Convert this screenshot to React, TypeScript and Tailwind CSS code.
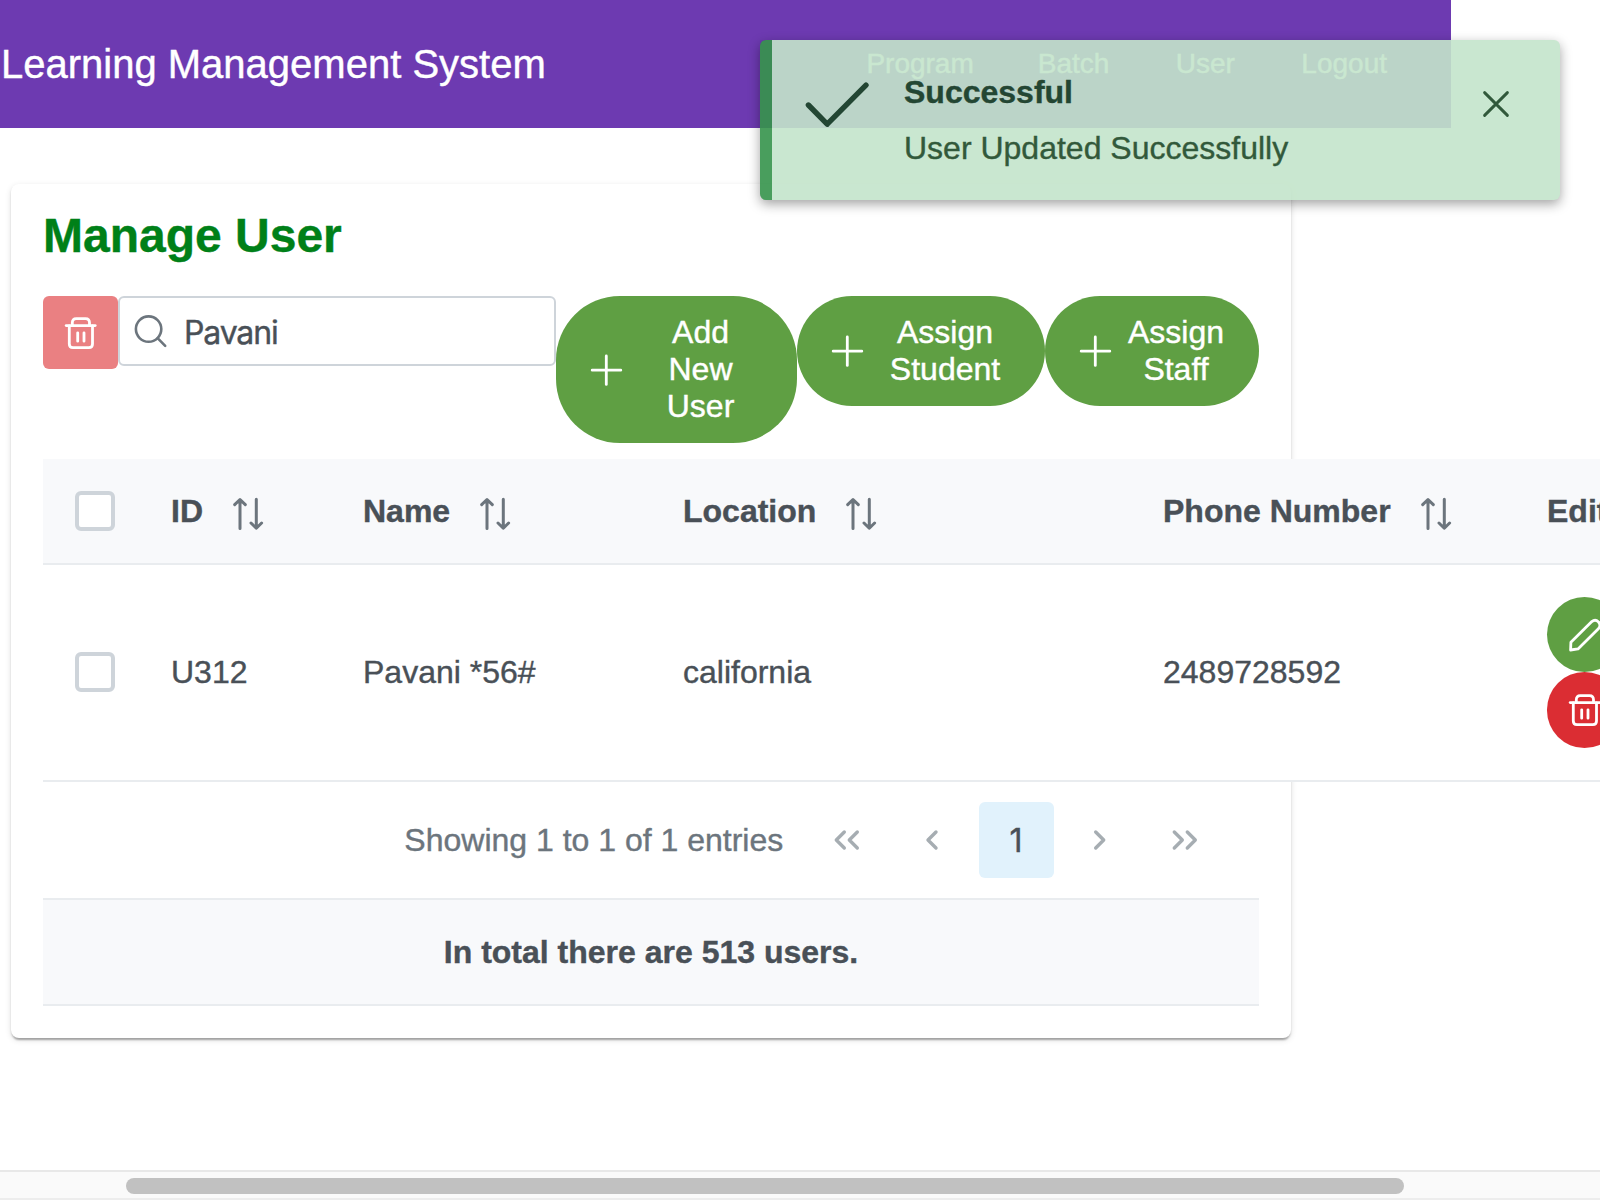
import type { ReactNode } from "react";

function Glyph({ children, className = "size-8", width = 2.8 }: { children: ReactNode; className?: string; width?: number }) {
  return (
    <svg
      viewBox="0 0 32 32"
      className={`shrink-0 overflow-visible ${className}`}
      fill="none"
      stroke="currentColor"
      strokeWidth={width}
      strokeLinecap="round"
      strokeLinejoin="round"
    >
      {children}
    </svg>
  );
}

const Trash = () => (
  <Glyph>
    <path d="M1.2 8.6H30.2" />
    <path d="M7.3 8.4V5.8Q7.3 1.6 11.3 1.6H20.5Q24.5 1.6 24.5 5.8V8.4" />
    <path d="M4.3 9V27Q4.3 30.6 7.9 30.6H23.9Q27.5 30.6 27.5 27V9" />
    <path d="M12.7 15.8V24.2M19 15.8V24.2" />
  </Glyph>
);

const Pencil = () => (
  <Glyph>
    <path d="M1.6 31L1.9 23.3L22.8 2.6Q26.3 -0.2 29.5 3Q32.4 6.2 29.6 9.6L9 29.9Z" />
  </Glyph>
);

const Plus = () => (
  <Glyph>
    <path d="M16.3 2V30.4M2.2 16.2H30.8" />
  </Glyph>
);

const Sort = () => (
  <Glyph className="size-8 text-[#6c757d]" width={3}>
    <path d="M8 30.4V1.8M2.7 6.6L8 1.5L13.3 6.6M24.3 1.2V30M19 25L24.3 30.2L29.6 25" />
  </Glyph>
);

function NavItem({ label }: { label: string }) {
  return <a className="flex min-w-32 justify-center px-8 text-[28px] leading-8">{label}</a>;
}

function PillButton({ lines, className }: { lines: string[]; className: string }) {
  return (
    <button className={`flex items-center gap-4 rounded-[64px] bg-[#5f9f43] px-[34px] py-[18px] text-white ${className}`}>
      <Plus />
      <span className="flex flex-1 flex-col text-center">
        {lines.map((l) => (
          <span key={l}>{l}</span>
        ))}
      </span>
    </button>
  );
}

const Checkbox = () => <div className="size-10 rounded-md border-4 border-[#ced4da] bg-white" />;

function HeaderCell({ label, className }: { label: string; className: string }) {
  return (
    <div className={`flex items-center gap-[29px] pl-8 ${className}`}>
      <span className="whitespace-nowrap">{label}</span>
      <span className="pt-[5px]">
        <Sort />
      </span>
    </div>
  );
}

function PageArrow({ d }: { d: string }) {
  return (
    <button className="flex h-19 w-19 items-center justify-center text-[#a6adb2]">
      <Glyph width={3.4}>
        <path d={d} />
      </Glyph>
    </button>
  );
}

function UserTable() {
  return (
    <div className="w-[1700px]">
      <div className="flex h-[106px] items-center border-b-2 border-[#e9ecef] bg-[#f8f9fb] font-bold">
        <div className="w-24 pl-8">
          <Checkbox />
        </div>
        <HeaderCell label="ID" className="w-48" />
        <HeaderCell label="Name" className="w-80" />
        <HeaderCell label="Location" className="w-[480px]" />
        <HeaderCell label="Phone Number" className="w-96" />
        <div className="whitespace-nowrap pl-8">Edit</div>
      </div>
      <div className="flex h-[217px] items-center border-b-2 border-[#e9ecef] bg-white">
        <div className="w-24 pb-px pl-8">
          <Checkbox />
        </div>
        <div className="w-48 pl-8">U312</div>
        <div className="w-80 pl-8">Pavani *56#</div>
        <div className="w-[480px] pl-8">california</div>
        <div className="w-96 pl-8">2489728592</div>
        <div className="flex flex-col pl-8 text-white">
          <button className="flex h-[75px] w-[75px] items-center justify-center rounded-full bg-[#5f9f43]">
            <Pencil />
          </button>
          <button className="flex h-[76px] w-[75px] items-center justify-center rounded-full bg-[#db2d33]">
            <Trash />
          </button>
        </div>
      </div>
    </div>
  );
}

function Toast() {
  return (
    <div className="absolute left-[760px] top-10 flex h-40 w-[800px] rounded-md border-l-[12px] border-[#36944c] bg-[#c4e5cb] pl-8 text-[#1b4826] opacity-90 shadow-[0_4px_12px_rgba(0,0,0,0.4)]">
      <Glyph className="mt-8 size-16" width={2.7}>
        <path d="M2.2 16.5L11.6 26.1L31 6.6" />
      </Glyph>
      <div className="ml-9 flex flex-1 flex-col gap-[19px] pt-[34px]">
        <span className="font-bold">Successful</span>
        <span>User Updated Successfully</span>
      </div>
      <div className="mr-12 mt-12">
        <Glyph width={2.9}>
          <path d="M4.6 4.6L27.4 27.4M27.4 4.6L4.6 27.4" />
        </Glyph>
      </div>
    </div>
  );
}

export default function App() {
  return (
    <div className="relative flex h-[1200px] w-[1600px] flex-col overflow-hidden bg-white font-['Liberation_Sans',Arial,sans-serif] text-[32px] leading-[37px] text-[#495057] [-webkit-text-stroke:0.4px_currentColor]">
      <header className="flex h-32 w-[1451px] shrink-0 items-center justify-between bg-[#6d3ab1] pr-8 text-white">
        <h1 className="pl-px text-[40px] leading-[64px]">Learning Management System</h1>
        <nav className="flex">
          <NavItem label="Program" />
          <NavItem label="Batch" />
          <NavItem label="User" />
          <NavItem label="Logout" />
        </nav>
      </header>

      <main className="flex flex-1 flex-col pl-[11px] pt-14">
        <section className="h-[854px] w-[1280px] rounded-lg bg-white px-8 pt-6 shadow-[0_4px_2px_-2px_rgba(0,0,0,0.2),0_2px_2px_0_rgba(0,0,0,0.14),0_2px_6px_0_rgba(0,0,0,0.12)]">
          <h2 className="text-[48px] font-bold leading-[56px] text-[#008018]">Manage User</h2>

          <div className="mt-8 flex h-[163px] items-start">
            <button className="flex h-[73px] w-[75px] items-center justify-center rounded-md bg-[#ea8082] text-white">
              <Trash />
            </button>
            <div className="flex h-[70px] w-[438px] items-center gap-4 rounded-md border-2 border-[#ced4da] bg-white pl-[14px]">
              <Glyph className="size-8 text-[#6c757d]" width={2.6}>
                <circle cx="14.6" cy="14.1" r="12.7" />
                <path d="M23.6 23.2L31.2 30.8" />
              </Glyph>
              <span className="pl-0.5 pt-0.5 font-[Inter,sans-serif] tracking-[-1.15px]">Pavani</span>
            </div>
            <PillButton lines={["Add", "New", "User"]} className="h-[147px] w-[241px]" />
            <PillButton lines={["Assign", "Student"]} className="h-[110px] w-[248px]" />
            <PillButton lines={["Assign", "Staff"]} className="h-[110px] w-[214px]" />
          </div>

          <UserTable />

          <div className="flex h-[116px] items-center justify-end gap-[8.75px] pr-9">
            <span className="mr-[17px] text-[#6c757d]">Showing 1 to 1 of 1 entries</span>
            <PageArrow d="M13.3 8L5.3 16L13.3 24M26.3 8L18.3 16L26.3 24" />
            <PageArrow d="M20 8L12 16L20 24" />
            <button className="flex h-19 w-[75px] items-center justify-center rounded-md bg-[#e1f2fc] font-[Inter,sans-serif]">1</button>
            <PageArrow d="M11.7 8L19.7 16L11.7 24" />
            <PageArrow d="M5.3 8L13.3 16L5.3 24M18.3 8L26.3 16L18.3 24" />
          </div>

          <div className="flex h-[108px] items-center justify-center border-y-2 border-[#e9ecef] bg-[#f8f9fb] font-bold">
            In total there are 513 users.
          </div>
        </section>
      </main>

      <div className="flex h-[30px] shrink-0 items-start border-y-2 border-t-[#e8e8e8] border-b-[#ededed] bg-[#fafafa] pl-[126px] pt-1.5">
        <div className="h-4 w-[1278px] rounded-full bg-[#c1c1c1]" />
      </div>

      <Toast />
    </div>
  );
}
